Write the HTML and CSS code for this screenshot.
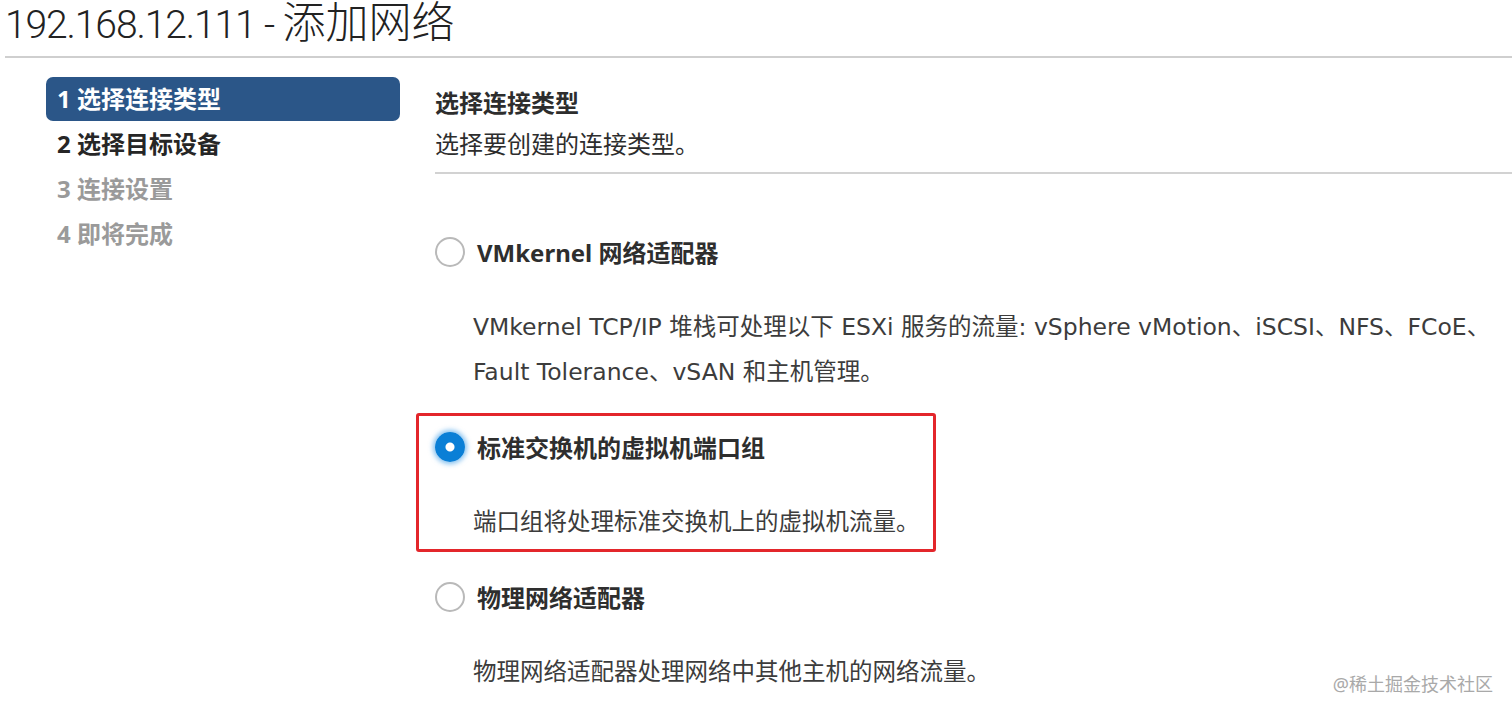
FILE: index.html
```html
<!DOCTYPE html>
<html lang="zh-CN">
<head>
<meta charset="utf-8">
<title>192.168.12.111 - 添加网络</title>
<link rel="stylesheet" href="styles.css">
</head>
<body>
<div class="page">
  <h1 class="title"><span class="title-host">192.168.12.111 - </span><span class="title-name">添加网络</span></h1>
  <div class="layout">
    <nav class="steps">
      <div class="step active">1 选择连接类型</div>
      <div class="step done">2 选择目标设备</div>
      <div class="step todo">3 连接设置</div>
      <div class="step todo">4 即将完成</div>
    </nav>
    <main class="main">
      <div class="main-head">
        <div class="main-title">选择连接类型</div>
        <div class="main-sub">选择要创建的连接类型。</div>
      </div>
      <div class="options">
        <div class="option">
          <div class="option-row">
            <span class="radio"></span>
            <span class="option-label">VMkernel 网络适配器</span>
          </div>
          <div class="option-desc">VMkernel TCP/IP 堆栈可处理以下 ESXi 服务的流量: vSphere vMotion、iSCSI、NFS、FCoE、<br>Fault Tolerance、vSAN 和主机管理。</div>
        </div>
        <div class="option marked">
          <div class="option-row">
            <span class="radio checked"></span>
            <span class="option-label">标准交换机的虚拟机端口组</span>
          </div>
          <div class="option-desc">端口组将处理标准交换机上的虚拟机流量。</div>
        </div>
        <div class="option">
          <div class="option-row">
            <span class="radio"></span>
            <span class="option-label">物理网络适配器</span>
          </div>
          <div class="option-desc">物理网络适配器处理网络中其他主机的网络流量。</div>
        </div>
      </div>
    </main>
  </div>
  <div class="watermark">@稀土掘金技术社区</div>
</div>
</body>
</html>
```

FILE: styles.css
```css
html, body {
  margin: 0;
  padding: 0;
  background: #ffffff;
}

body {
  font-family: "Noto Sans", "Noto Sans CJK SC", sans-serif;
  color: #333333;
}

.page {
  position: relative;
  width: 1512px;
  height: 714px;
  overflow: hidden;
}

.title {
  margin: -3px 0 0 5px;
  padding: 0 0 15px 0;
  height: 44px;
  line-height: 44px;
  font-weight: 300;
  color: #222222;
  border-bottom: 2px solid #cfcfcf;
  white-space: nowrap;
}

.title-host {
  font-family: "Roboto", "Noto Sans CJK SC", sans-serif;
  font-size: 39px;
  font-weight: 300;
  letter-spacing: -1.1px;
}

.title-name {
  font-family: "Noto Sans CJK SC", sans-serif;
  font-size: 43px;
  font-weight: 300;
}

.layout {
  display: flex;
  padding-top: 19px;
}

.steps {
  margin-left: 46px;
  width: 354px;
  flex: none;
}

.step {
  height: 45px;
  line-height: 44px;
  padding-left: 11px;
  font-size: 24px;
  font-weight: 700;
  white-space: nowrap;
}

.step.active {
  height: 44px;
  margin-bottom: 1px;
  background: #2b5688;
  color: #ffffff;
  border-radius: 7px;
}

.step.done {
  color: #262626;
}

.step.todo {
  color: #9a9a9a;
}

.main {
  margin-left: 35px;
  flex: 1;
  min-width: 0;
}

.main-head {
  padding-top: 6px;
  padding-bottom: 8px;
  border-bottom: 2px solid #d2d2d2;
}

.main-title {
  font-size: 24px;
  line-height: 40px;
  font-weight: 700;
  color: #2d2d2d;
}

.main-sub {
  margin-top: 1px;
  font-size: 24px;
  line-height: 40px;
  color: #2d2d2d;
}

.options {
  margin-top: 55px;
  display: flex;
  flex-direction: column;
  gap: 29px;
}

.option-row {
  display: flex;
  align-items: center;
  height: 45px;
  gap: 12px;
}

.option-label {
  font-size: 24px;
  font-weight: 700;
  color: #2e2e2e;
  white-space: nowrap;
}

.option-desc {
  margin-top: 31px;
  padding-left: 38px;
  font-family: "DejaVu Sans", "Noto Sans CJK SC", sans-serif;
  font-size: 23.5px;
  line-height: 45px;
  color: #3c3c3c;
  white-space: nowrap;
}

.option.marked {
  width: 520px;
  box-sizing: border-box;
  margin: -11px 0 -7px -19px;
  padding: 8px 0 4px 16px;
  border: 3px solid #e3262b;
  border-radius: 3px;
}

.radio {
  flex: none;
  width: 30px;
  height: 30px;
  box-sizing: border-box;
  border: 2px solid #b9b9b9;
  border-radius: 50%;
  background: #ffffff;
}

.radio.checked {
  border: none;
  background: radial-gradient(circle, #ffffff 0 4px, #0a7fd6 5px);
  box-shadow: 0 0 5px 2px rgba(30, 140, 225, 0.55);
}

.watermark {
  position: absolute;
  right: 19px;
  bottom: 18px;
  font-size: 18px;
  line-height: 24px;
  color: #a9a9a9;
  white-space: nowrap;
}
```
